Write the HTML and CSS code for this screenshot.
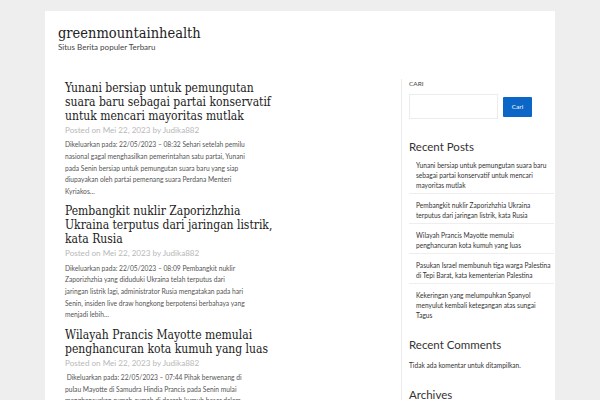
FILE: index.html
```html
<!DOCTYPE html>
<html>
<head>
<meta charset="utf-8">
<link rel="stylesheet" href="styles.css">
</head>
<body>
<div class="page">
  <header class="site-header">
    <div class="site-title">greenmountainhealth</div>
    <div class="site-desc">Situs Berita populer Terbaru</div>
  </header>
  <div class="content">
    <main class="main">
      <article class="post">
        <h2 class="post-title">Yunani bersiap untuk pemungutan<br>suara baru sebagai partai konservatif<br>untuk mencari mayoritas mutlak</h2>
        <div class="meta">Posted on Mei 22, 2023 by Judika882</div>
        <p class="excerpt">Dikeluarkan pada: 22/05/2023 – 08:32 Sehari setelah pemilu nasional gagal menghasilkan pemerintahan satu partai, Yunani pada Senin bersiap untuk pemungutan suara baru yang siap diupayakan oleh partai pemenang suara Perdana Menteri Kyriakos…</p>
      </article>
      <article class="post">
        <h2 class="post-title">Pembangkit nuklir Zaporizhzhia<br>Ukraina terputus dari jaringan listrik,<br>kata Rusia</h2>
        <div class="meta">Posted on Mei 22, 2023 by Judika882</div>
        <p class="excerpt">Dikeluarkan pada: 22/05/2023 – 08:09 Pembangkit nuklir Zaporizhzhia yang diduduki Ukraina telah terputus dari jaringan listrik lagi, administrator Rusia mengatakan pada hari Senin, insiden live draw hongkong berpotensi berbahaya yang menjadi lebih…</p>
      </article>
      <article class="post">
        <h2 class="post-title">Wilayah Prancis Mayotte memulai<br>penghancuran kota kumuh yang luas</h2>
        <div class="meta">Posted on Mei 22, 2023 by Judika882</div>
        <p class="excerpt">&nbsp;Dikeluarkan pada: 22/05/2023 – 07:44 Pihak berwenang di pulau Mayotte di Samudra Hindia Prancis pada Senin mulai menghancurkan rumah-rumah di daerah kumuh besar dalam upaya…</p>
      </article>
    </main>
    <aside class="sidebar">
      <section class="widget">
        <div class="search-label">CARI</div>
        <div class="search-row">
          <div class="search-input"></div>
          <button class="search-btn">Cari</button>
        </div>
      </section>
      <section class="widget">
        <h3 class="widget-title first">Recent Posts</h3>
        <ul class="recent">
          <li>Yunani bersiap untuk pemungutan suara baru sebagai partai konservatif untuk mencari mayoritas mutlak</li>
          <li>Pembangkit nuklir Zaporizhzhia Ukraina terputus dari jaringan listrik, kata Rusia</li>
          <li>Wilayah Prancis Mayotte memulai penghancuran kota kumuh yang luas</li>
          <li>Pasukan Israel membunuh tiga warga Palestina di Tepi Barat, kata kementerian Palestina</li>
          <li class="last">Kekeringan yang melumpuhkan Spanyol menyulut kembali ketegangan atas sungai Tagus</li>
        </ul>
      </section>
      <section class="widget">
        <h3 class="widget-title">Recent Comments</h3>
        <p class="no-comments">Tidak ada komentar untuk ditampilkan.</p>
      </section>
      <section class="widget">
        <h3 class="widget-title archives">Archives</h3>
      </section>
    </aside>
  </div>
</div>
</body>
</html>
```
FILE: styles.css
```css
html, body {
  margin: 0;
  padding: 0;
}
body {
  background: #eeeeee;
  font-family: "Lato", "Liberation Sans", sans-serif;
  color: #333;
  height: 400px;
  overflow: hidden;
}
.page {
  background: #fff;
  margin: 11px 0 0 45px;
  width: 510px;
  height: 389px;
  overflow: hidden;
}
.site-header {
  padding: 12px 0 0 13px;
  height: 56px;
}
.site-title {
  font-family: "DejaVu Serif Condensed", "DejaVu Serif", serif;
  font-size: 14.5px;
  line-height: 20px;
  color: #222;
}
.site-desc {
  font-size: 8px;
  line-height: 12px;
  color: #444;
  margin-top: -2px;
}
.content {
  display: flex;
  align-items: flex-start;
}
.main {
  width: 357px;
  padding: 2px 0 0 20px;
  box-sizing: border-box;
  border-right: 1px solid #ececec;
  min-height: 330px;
}
.post {
  width: 230px;
  margin-bottom: 7px;
}
.post-title {
  font-family: "DejaVu Serif Condensed", "DejaVu Serif", serif;
  font-weight: 400;
  font-size: 12px;
  line-height: 14px;
  color: #222;
  margin: 0;
  white-space: nowrap;
}
.meta {
  font-size: 8.1px;
  color: #b8b8b8;
  margin-top: 1px;
  line-height: 12px;
}
.excerpt {
  width: 183px;
  font-size: 6.7px;
  line-height: 11.6px;
  color: #555;
  margin: 3.4px 0 0 0;
}
.sidebar {
  padding: 0 0 0 7px;
  width: 145px;
}
.search-label {
  font-size: 6.5px;
  color: #444;
  line-height: 10px;
}
.search-row {
  display: flex;
  align-items: center;
  margin-top: 5px;
}
.search-input {
  width: 87px;
  height: 23px;
  border: 1px solid #ececec;
}
.search-btn {
  margin-left: 5px;
  width: 29px;
  height: 20px;
  background: #0b66c8;
  color: #fff;
  border: 0;
  border-radius: 1px;
  font-family: "Lato", sans-serif;
  font-size: 6.5px;
  padding: 0;
}
.widget-title {
  font-weight: 400;
  font-size: 11.5px;
  color: #333;
  line-height: 14px;
  margin: 15px 0 0 0;
}
.widget-title.first {
  margin-top: 21px;
}
.widget-title.archives {
  margin-top: 18px;
}
.recent {
  list-style: none;
  margin: 0;
  padding: 0;
}
.recent li {
  font-size: 6.6px;
  line-height: 10px;
  color: #333;
  padding: 6px 2px 3px 7px;
  border-bottom: 1px solid #eeeeee;
}
.recent li.last {
  border-bottom: 0;
}
.no-comments {
  font-size: 6.6px;
  margin: 8px 0 0 0;
  line-height: 10px;
  color: #333;
}
```
